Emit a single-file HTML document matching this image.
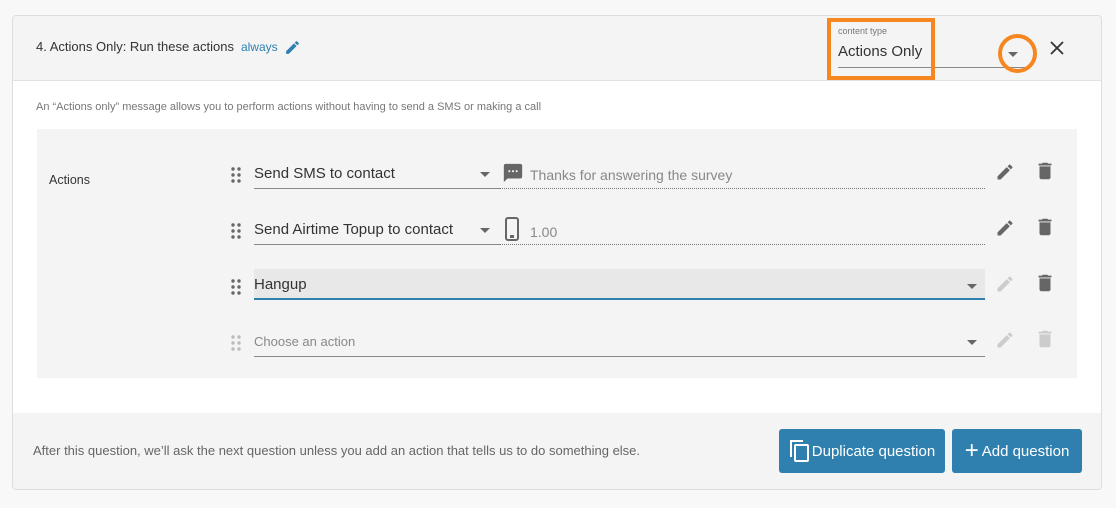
<!DOCTYPE html>
<html><head><meta charset="utf-8"><style>
*{box-sizing:border-box;margin:0;padding:0}
body{width:1116px;height:508px;background:#f8f8f8;font-family:"Liberation Sans",sans-serif;position:relative;overflow:hidden;color:#333}
.a{position:absolute}
.card{left:12px;top:15px;width:1090px;height:475px;border:1px solid #ddd;border-radius:4px;background:#fff;overflow:hidden}
.hdr{left:0;top:0;width:100%;height:65px;background:#f4f4f4;border-bottom:1px solid #e2e2e2}
.panel{left:24px;top:113px;width:1040px;height:249px;background:#f4f4f4}
.foot{left:0;top:397px;width:100%;height:78px;background:#f4f4f4}
.sel{border-bottom:1px solid #888;font-size:15px;color:#333}
.dot{border-bottom:1px dotted #777}
.tri{width:0;height:0;border-left:5px solid transparent;border-right:5px solid transparent;border-top:5px solid #666}
.btn{background:#2f80ae;color:#fff;border-radius:3px;font-size:15px;height:44px;top:413px;display:flex;align-items:center;justify-content:center}
</style></head><body>
<div class="a card">
 <div class="a hdr">
  <div class="a" style="left:23px;top:23px;font-size:13px;color:#333">4. Actions Only: Run these actions <span style="color:#2f80ae;font-size:12px">&nbsp;always</span></div>
  <svg class="a" style="left:271px;top:23px" width="17" height="17" viewBox="0 0 24 24"><path fill="#2f80ae" d="M3 17.25V21h3.75L17.81 9.94l-3.75-3.75L3 17.25zM20.71 7.04a1 1 0 0 0 0-1.41l-2.34-2.34a1 1 0 0 0-1.41 0l-1.83 1.83 3.75 3.75 1.83-1.83z"/></svg>
  <div class="a" style="left:825px;top:10px;font-size:9px;color:#777">content type</div>
  <div class="a sel" style="left:825px;top:25px;width:188px;height:27px;font-size:15px;padding-top:2px">Actions Only</div>
  <div class="a tri" style="left:995px;top:36px"></div>
  <div class="a" style="left:814px;top:2px;width:108px;height:62px;border:4px solid #f6861f"></div>
  <div class="a" style="left:985px;top:18px;width:39px;height:39px;border:4px solid #f6861f;border-radius:50%"></div>
  <svg class="a" style="left:1037px;top:25px" width="14" height="14" viewBox="0 0 14 14"><path d="M1 1L13 13M13 1L1 13" stroke="#333" stroke-width="1.8"/></svg>
 </div>
 <div class="a" style="left:23px;top:85px;font-size:11px;color:#777">An “Actions only” message allows you to perform actions without having to send a SMS or making a call</div>
 <div class="a panel"></div>
 <div class="a" style="left:36px;top:157px;font-size:12.5px">Actions</div>

 <svg class="a" style="left:218px;top:151px" width="10" height="16"><g fill="#666"><circle cx="2" cy="2" r="1.7"/><circle cx="8" cy="2" r="1.7"/><circle cx="2" cy="8" r="1.7"/><circle cx="8" cy="8" r="1.7"/><circle cx="2" cy="14" r="1.7"/><circle cx="8" cy="14" r="1.7"/></g></svg>
 <div class="a sel" style="left:241px;top:146px;width:245px;height:27px;padding-top:3px">Send SMS to contact</div>
 <div class="a tri" style="left:467px;top:156px"></div>
 <svg class="a" style="left:489px;top:146px" width="22" height="22" viewBox="0 0 24 24"><path fill="#666" d="M20 2H4c-1.1 0-2 .9-2 2v18l4-4h14c1.1 0 2-.9 2-2V4c0-1.1-.9-2-2-2zM9 11H7V9h2v2zm4 0h-2V9h2v2zm4 0h-2V9h2v2z"/></svg>
 <div class="a dot" style="left:486px;top:148px;width:486px;height:25px;padding-left:31px;font-size:14px;color:#888;padding-top:3px">Thanks for answering the survey</div>
 <svg class="a" style="left:982px;top:146px" width="20" height="20" viewBox="0 0 24 24"><path fill="#666" d="M3 17.25V21h3.75L17.81 9.94l-3.75-3.75L3 17.25zM20.71 7.04a1 1 0 0 0 0-1.41l-2.34-2.34a1 1 0 0 0-1.41 0l-1.83 1.83 3.75 3.75 1.83-1.83z"/></svg>
 <svg class="a" style="left:1021px;top:143px" width="22" height="24" viewBox="0 0 24 24"><path fill="#666" d="M6 19c0 1.1.9 2 2 2h8c1.1 0 2-.9 2-2V7H6v12zM19 4h-3.5l-1-1h-5l-1 1H5v2h14V4z"/></svg>

 <svg class="a" style="left:218px;top:207px" width="10" height="16"><g fill="#666"><circle cx="2" cy="2" r="1.7"/><circle cx="8" cy="2" r="1.7"/><circle cx="2" cy="8" r="1.7"/><circle cx="8" cy="8" r="1.7"/><circle cx="2" cy="14" r="1.7"/><circle cx="8" cy="14" r="1.7"/></g></svg>
 <div class="a sel" style="left:241px;top:202px;width:245px;height:27px;padding-top:3px">Send Airtime Topup to contact</div>
 <div class="a tri" style="left:467px;top:212px"></div>
 <svg class="a" style="left:491px;top:201px" width="16" height="24" viewBox="0 0 16 24"><rect x="2" y="1" width="12" height="22" rx="2" fill="none" stroke="#666" stroke-width="2"/><rect x="6" y="18" width="4" height="3" fill="#666"/></svg>
 <div class="a dot" style="left:486px;top:204px;width:486px;height:25px;padding-left:31px;font-size:14px;color:#888;padding-top:4px">1.00</div>
 <svg class="a" style="left:982px;top:202px" width="20" height="20" viewBox="0 0 24 24"><path fill="#666" d="M3 17.25V21h3.75L17.81 9.94l-3.75-3.75L3 17.25zM20.71 7.04a1 1 0 0 0 0-1.41l-2.34-2.34a1 1 0 0 0-1.41 0l-1.83 1.83 3.75 3.75 1.83-1.83z"/></svg>
 <svg class="a" style="left:1021px;top:199px" width="22" height="24" viewBox="0 0 24 24"><path fill="#666" d="M6 19c0 1.1.9 2 2 2h8c1.1 0 2-.9 2-2V7H6v12zM19 4h-3.5l-1-1h-5l-1 1H5v2h14V4z"/></svg>

 <svg class="a" style="left:218px;top:263px" width="10" height="16"><g fill="#666"><circle cx="2" cy="2" r="1.7"/><circle cx="8" cy="2" r="1.7"/><circle cx="2" cy="8" r="1.7"/><circle cx="8" cy="8" r="1.7"/><circle cx="2" cy="14" r="1.7"/><circle cx="8" cy="14" r="1.7"/></g></svg>
 <div class="a" style="left:241px;top:253px;width:731px;height:31px;background:#e8e8e8;border-bottom:2px solid #2f80ae;font-size:15px;padding-top:7px">Hangup</div>
 <div class="a tri" style="left:954px;top:268px"></div>
 <svg class="a" style="left:982px;top:258px" width="20" height="20" viewBox="0 0 24 24"><path fill="#ccc" d="M3 17.25V21h3.75L17.81 9.94l-3.75-3.75L3 17.25zM20.71 7.04a1 1 0 0 0 0-1.41l-2.34-2.34a1 1 0 0 0-1.41 0l-1.83 1.83 3.75 3.75 1.83-1.83z"/></svg>
 <svg class="a" style="left:1021px;top:255px" width="22" height="24" viewBox="0 0 24 24"><path fill="#666" d="M6 19c0 1.1.9 2 2 2h8c1.1 0 2-.9 2-2V7H6v12zM19 4h-3.5l-1-1h-5l-1 1H5v2h14V4z"/></svg>

 <svg class="a" style="left:218px;top:319px" width="10" height="16"><g fill="#bbb"><circle cx="2" cy="2" r="1.7"/><circle cx="8" cy="2" r="1.7"/><circle cx="2" cy="8" r="1.7"/><circle cx="8" cy="8" r="1.7"/><circle cx="2" cy="14" r="1.7"/><circle cx="8" cy="14" r="1.7"/></g></svg>
 <div class="a sel" style="left:241px;top:316px;width:731px;height:25px;font-size:13px;color:#888;padding-top:2px">Choose an action</div>
 <div class="a tri" style="left:954px;top:324px"></div>
 <svg class="a" style="left:982px;top:314px" width="20" height="20" viewBox="0 0 24 24"><path fill="#ccc" d="M3 17.25V21h3.75L17.81 9.94l-3.75-3.75L3 17.25zM20.71 7.04a1 1 0 0 0 0-1.41l-2.34-2.34a1 1 0 0 0-1.41 0l-1.83 1.83 3.75 3.75 1.83-1.83z"/></svg>
 <svg class="a" style="left:1021px;top:311px" width="22" height="24" viewBox="0 0 24 24"><path fill="#ccc" d="M6 19c0 1.1.9 2 2 2h8c1.1 0 2-.9 2-2V7H6v12zM19 4h-3.5l-1-1h-5l-1 1H5v2h14V4z"/></svg>

 <div class="a foot"></div>
 <div class="a" style="left:20px;top:427px;font-size:13px;color:#666">After this question, we’ll ask the next question unless you add an action that tells us to do something else.</div>
 <div class="a btn" style="left:766px;width:166px"><svg width="22" height="24" viewBox="0 0 22 24" style="margin-right:1px"><path d="M2 18V2h12" fill="none" stroke="#fff" stroke-width="2"/><rect x="6" y="6" width="13" height="16" rx="1" fill="none" stroke="#fff" stroke-width="2"/></svg>Duplicate question</div>
 <div class="a btn" style="left:939px;width:130px"><span style="font-size:24px;font-weight:300;margin-right:3px;line-height:1">+</span>Add question</div>
</div>
</body></html>
